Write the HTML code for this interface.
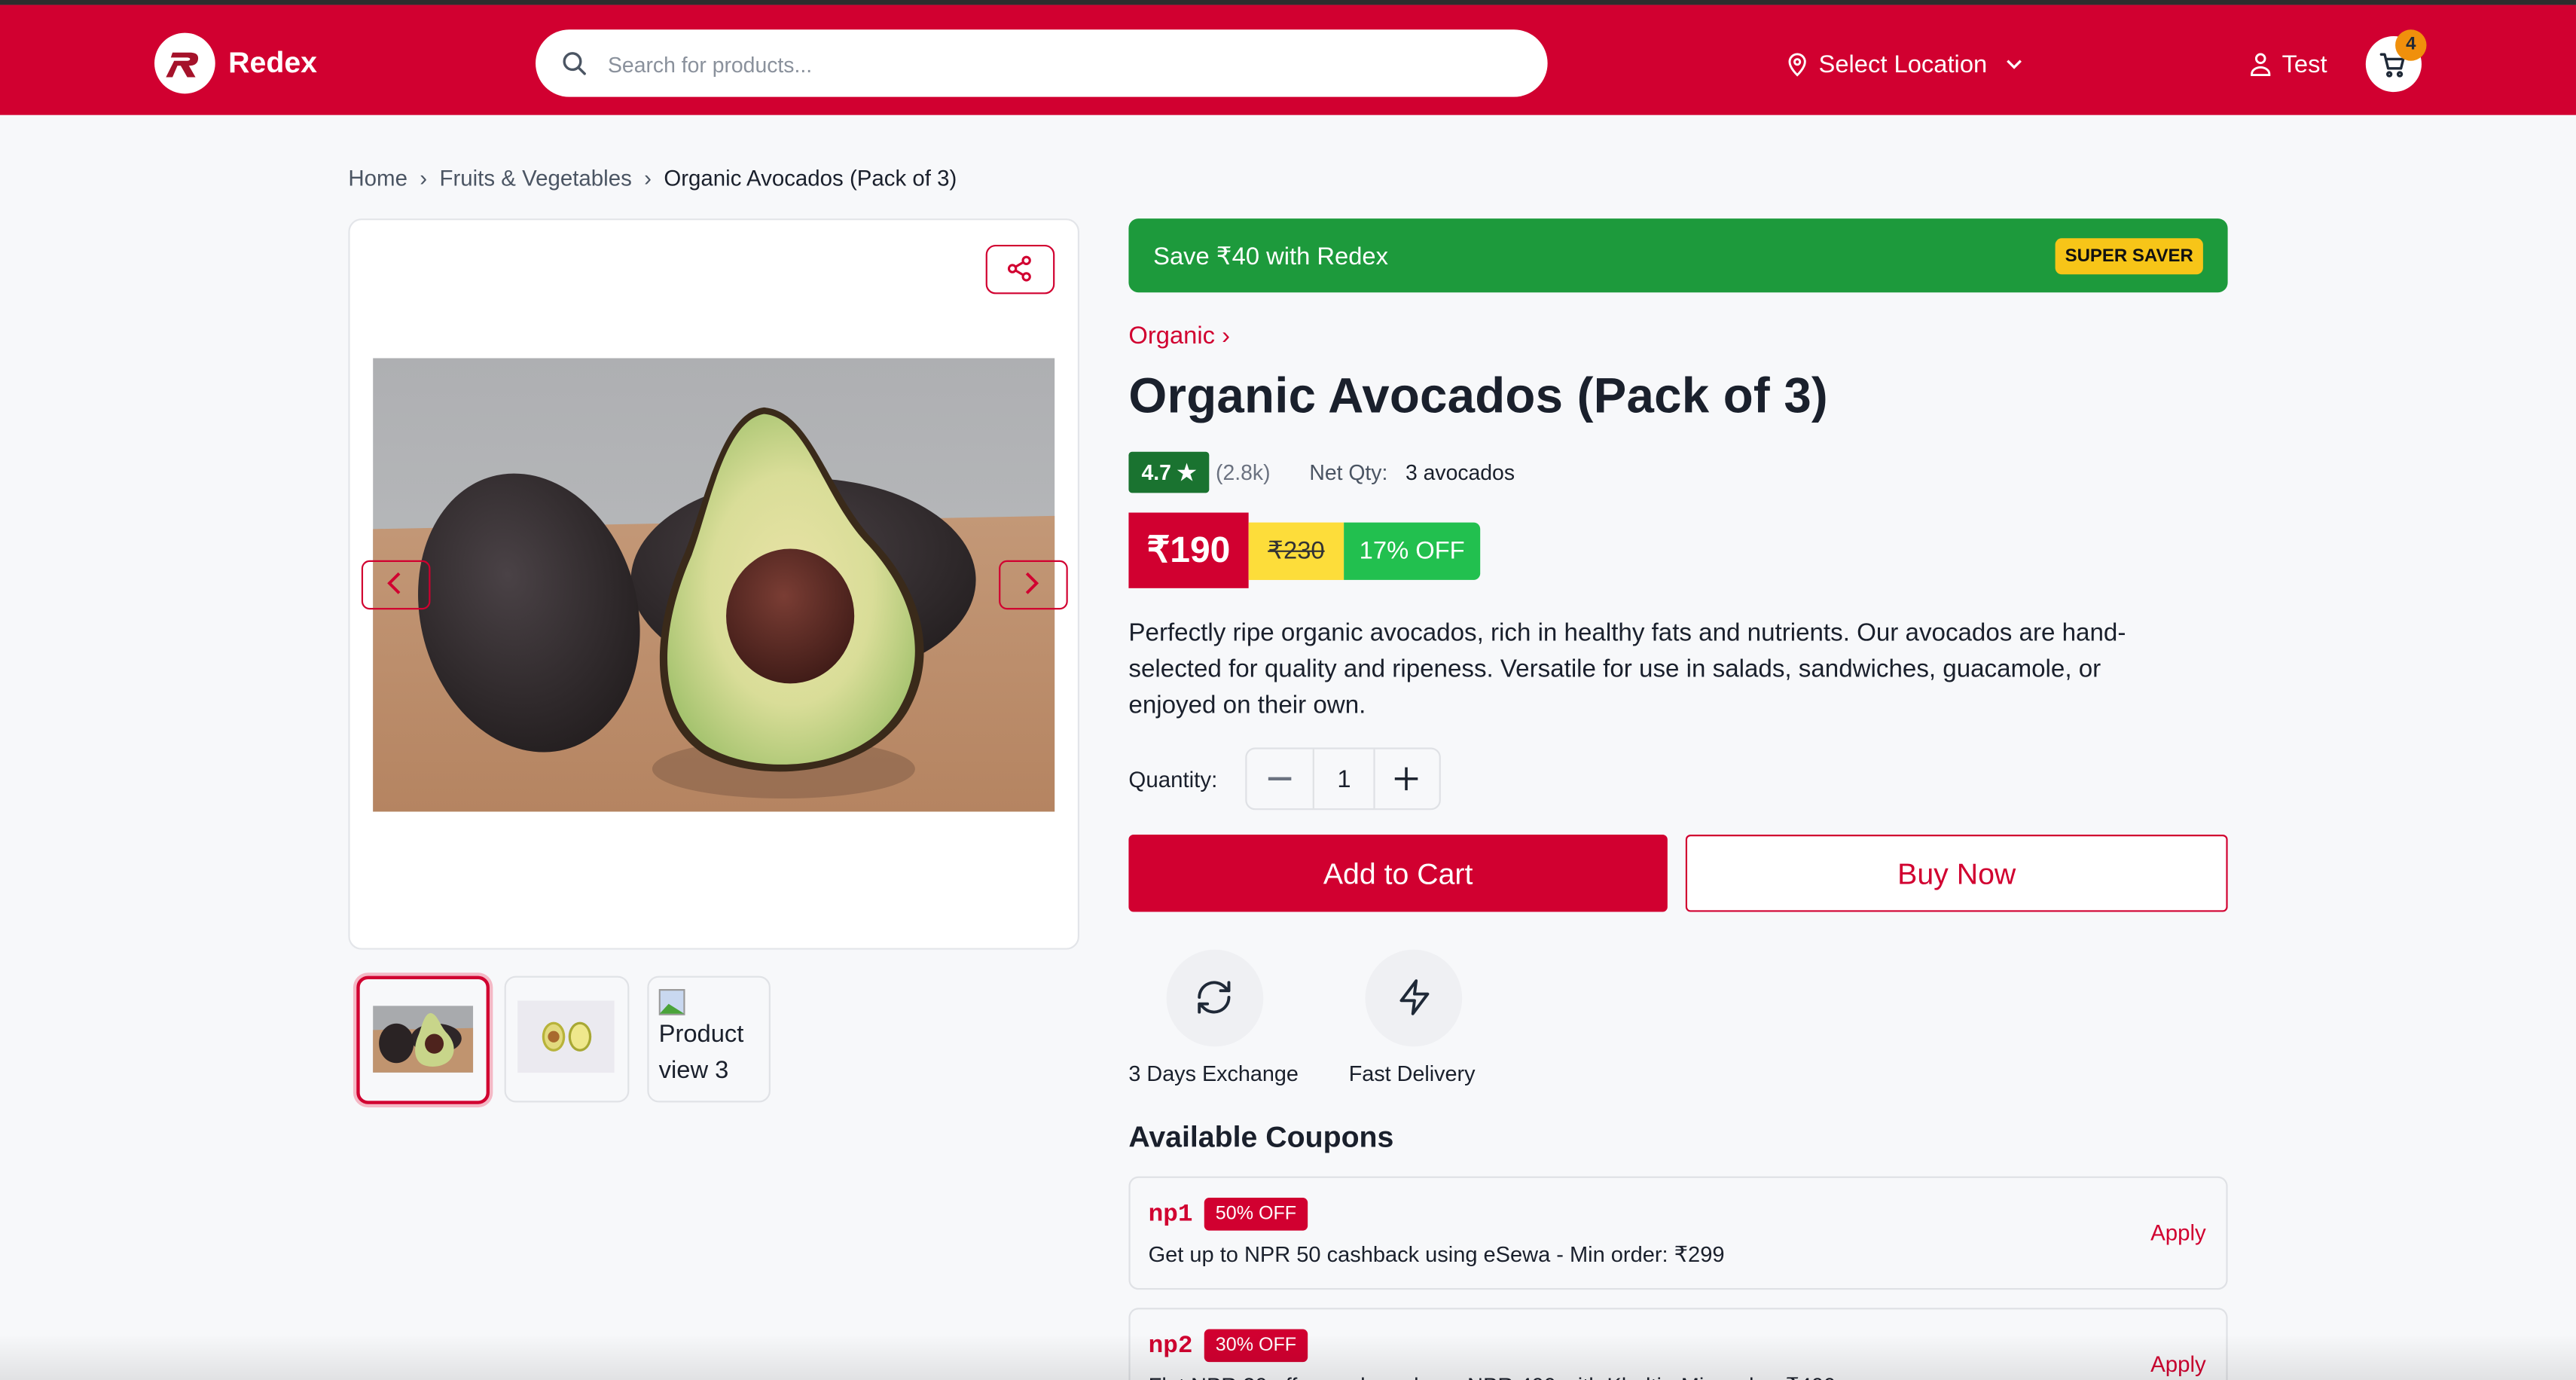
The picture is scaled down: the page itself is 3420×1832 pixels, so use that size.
<!DOCTYPE html>
<html><head><meta charset="utf-8">
<style>
html,body{margin:0;padding:0;width:3420px;height:1832px;overflow:hidden;background:#f7f8fa}
#w{position:absolute;left:0;top:0;width:1568px;height:840px;transform:scale(2.18112);transform-origin:0 0;font-family:"Liberation Sans",sans-serif;color:#1a202c;background:#f7f8fa;overflow:hidden}
.a{position:absolute;white-space:nowrap}
.red{color:#d10030}
</style></head><body><div id="w">
<!-- header -->
<div class="a" style="left:0;top:0;width:1568px;height:3px;background:#2d2d2d"></div>
<div class="a" style="left:0;top:3px;width:1568px;height:67px;background:#d10030"></div>
<div class="a" style="left:94px;top:20px;width:37px;height:37px;border-radius:50%;background:#fff"></div>
<svg class="a" style="left:101px;top:29px" width="24" height="20" viewBox="0 0 24 20"><path d="M4 3h11c4 0 5 2 4.5 4.5S17 11 14 11l4 7h-5l-4-7H7l-3 7H0l5-10h8c1.5 0 2-1 1.5-1.5S13 6 12 6H3z" fill="#a5122a"/></svg>
<div class="a" style="left:139px;top:28px;font-size:18px;font-weight:bold;color:#fff">Redex</div>
<div class="a" style="left:326px;top:18px;width:616px;height:41px;border-radius:21px;background:#fff"></div>
<svg class="a" style="left:341px;top:30px" width="17" height="17" viewBox="0 0 24 24" fill="none" stroke="#4b5563" stroke-width="2.2" stroke-linecap="round"><circle cx="10.5" cy="10.5" r="7"/><path d="M16 16l5 5"/></svg>
<div class="a" style="left:370px;top:32px;font-size:13px;color:#8a919c">Search for products...</div>
<svg class="a" style="left:1086px;top:30px" width="16" height="18" viewBox="0 0 24 24" fill="none" stroke="#fff" stroke-width="2"><path d="M12 22s-7-6.5-7-12a7 7 0 0 1 14 0c0 5.5-7 12-7 12z"/><circle cx="12" cy="10" r="2.5"/></svg>
<div class="a" style="left:1107px;top:31px;font-size:15px;color:#fff">Select Location</div>
<svg class="a" style="left:1220px;top:34px" width="12" height="10" viewBox="0 0 12 10" fill="none" stroke="#fff" stroke-width="1.5"><path d="M2 3l4 4 4-4"/></svg>
<svg class="a" style="left:1368px;top:30px" width="16" height="18" viewBox="0 0 24 24" fill="none" stroke="#fff" stroke-width="2"><circle cx="12" cy="7" r="4"/><path d="M4 22v-1a8 6 0 0 1 16 0v1z"/></svg>
<div class="a" style="left:1389px;top:31px;font-size:15px;color:#fff">Test</div>
<div class="a" style="left:1440px;top:22px;width:34px;height:34px;border-radius:50%;background:#fff"></div>
<svg class="a" style="left:1448px;top:31px" width="17" height="17" viewBox="0 0 24 24" fill="none" stroke="#1f2937" stroke-width="2.2" stroke-linecap="round" stroke-linejoin="round"><path d="M2 3h3l3 12h11l2-8H6"/><circle cx="9" cy="20" r="1.6"/><circle cx="18" cy="20" r="1.6"/></svg>
<div class="a" style="left:1458px;top:18px;width:19px;height:19px;border-radius:50%;background:#f0900c;color:#1f2937;font-size:11px;font-weight:bold;text-align:center;line-height:19px">4</div>
<!-- breadcrumb -->
<div class="a" style="left:212px;top:101px;font-size:13.5px;color:#4b5563">Home &nbsp;›&nbsp; Fruits &amp; Vegetables &nbsp;›&nbsp; <span style="color:#1a202c">Organic Avocados (Pack of 3)</span></div>
<!-- image card -->
<div class="a" style="left:212px;top:133px;width:443px;height:443px;background:#fff;border:1px solid #e3e5e9;border-radius:8px"></div>
<div class="a" style="left:600px;top:149px;width:40px;height:28px;border:1.3px solid #d10030;border-radius:6px"></div>
<svg class="a" style="left:612px;top:155px" width="17" height="17" viewBox="0 0 24 24" fill="none" stroke="#d10030" stroke-width="2"><circle cx="18" cy="5" r="3"/><circle cx="6" cy="12" r="3"/><circle cx="18" cy="19" r="3"/><path d="M8.6 13.5l6.8 4M15.4 6.5l-6.8 4"/></svg>
<svg class="a" style="left:227px;top:218px" width="415" height="276" viewBox="0 0 415 276">
<defs>
<linearGradient id="wall" x1="0" y1="0" x2="0" y2="1"><stop offset="0" stop-color="#aeafb2"/><stop offset="1" stop-color="#bfc2c3"/></linearGradient>
<linearGradient id="tab" x1="0" y1="0" x2="0" y2="1"><stop offset="0" stop-color="#c39877"/><stop offset="1" stop-color="#b58461"/></linearGradient>
<radialGradient id="fl" cx="0.5" cy="0.5" r="0.6"><stop offset="0" stop-color="#e9e3a6"/><stop offset="0.55" stop-color="#d9dd98"/><stop offset="1" stop-color="#9fc06a"/></radialGradient>
<radialGradient id="pit" cx="0.45" cy="0.35" r="0.7"><stop offset="0" stop-color="#7a3d34"/><stop offset="1" stop-color="#3d1a16"/></radialGradient>
<radialGradient id="sk" cx="0.45" cy="0.35" r="0.7"><stop offset="0" stop-color="#4a4246"/><stop offset="1" stop-color="#221d1e"/></radialGradient>
</defs>
<rect width="415" height="276" fill="url(#wall)"/>
<path d="M0 104 L415 96 L415 276 L0 276Z" fill="url(#tab)"/>
<ellipse cx="262" cy="135" rx="105" ry="62" fill="url(#sk)"/>
<ellipse cx="95" cy="155" rx="66" ry="86" transform="rotate(-15 95 155)" fill="url(#sk)"/>
<ellipse cx="250" cy="250" rx="80" ry="18" fill="#7e5a44" opacity="0.5"/>
<path d="M238 30 C212 33 202 88 190 118 C168 168 168 218 200 240 C232 260 302 256 326 214 C346 178 332 138 302 108 C276 78 266 32 238 30Z" fill="#3a2a1a"/>
<path d="M238 34 C214 38 205 90 194 120 C173 168 173 215 203 236 C233 255 299 252 321 212 C340 178 327 140 299 111 C273 82 264 36 238 34Z" fill="url(#fl)"/>
<ellipse cx="254" cy="157" rx="39" ry="41" fill="url(#pit)"/>
</svg>
<div class="a" style="left:220px;top:341px;width:40px;height:28px;border:1.3px solid #d10030;border-radius:5px"></div>
<svg class="a" style="left:234px;top:347px" width="12" height="16" viewBox="0 0 12 16" fill="none" stroke="#d10030" stroke-width="1.8"><path d="M9 2L3 8l6 6"/></svg>
<div class="a" style="left:608px;top:341px;width:40px;height:28px;border:1.3px solid #d10030;border-radius:5px"></div>
<svg class="a" style="left:622px;top:347px" width="12" height="16" viewBox="0 0 12 16" fill="none" stroke="#d10030" stroke-width="1.8"><path d="M3 2l6 6-6 6"/></svg>
<!-- thumbs -->
<div class="a" style="left:217px;top:594px;width:77px;height:74px;border:2.5px solid #d10030;border-radius:7px;box-shadow:0 0 0 2px #f4b8c5;background:#f7f8fa"></div>
<svg class="a" style="left:227px;top:612px" width="61" height="41" viewBox="0 0 415 276"><rect width="415" height="276" fill="#a8aaad"/><path d="M0 100 L415 92 L415 276 L0 276Z" fill="#c0946f"/><ellipse cx="262" cy="135" rx="105" ry="62" fill="#2e2628"/><ellipse cx="97" cy="155" rx="72" ry="82" fill="#2a2324"/><path d="M238 30 C212 33 202 88 190 118 C168 168 168 218 200 240 C232 260 302 256 326 214 C346 178 332 138 302 108 C276 78 266 32 238 30Z" fill="#c8d58a"/><ellipse cx="254" cy="157" rx="39" ry="41" fill="#4e231d"/></svg>
<div class="a" style="left:307px;top:594px;width:74px;height:75px;border:1px solid #e0e2e6;border-radius:7px;background:#f7f8fa"></div>
<svg class="a" style="left:315px;top:609px" width="59" height="44" viewBox="0 0 59 44"><rect width="59" height="44" fill="#ebeaf0"/><ellipse cx="22" cy="22" rx="7" ry="9" fill="#b8b33a"/><ellipse cx="22" cy="22" rx="5.5" ry="7.5" fill="#e2da7e"/><circle cx="22" cy="22" r="3.5" fill="#a86a2e"/><ellipse cx="38" cy="22" rx="7" ry="9" fill="#a8a834"/><ellipse cx="38" cy="22" rx="5.5" ry="7.5" fill="#efe88c"/></svg>
<div class="a" style="left:394px;top:594px;width:73px;height:75px;border:1px solid #e0e2e6;border-radius:7px;background:#f7f8fa"></div>
<svg class="a" style="left:401px;top:602px" width="16" height="16" viewBox="0 0 16 16"><rect x="0.5" y="0.5" width="15" height="15" fill="#c9d8f0" stroke="#999"/><path d="M0.5 15 L6 9 L15.5 15Z" fill="#4aa33a"/></svg>
<div class="a" style="left:401px;top:619px;font-size:15px;line-height:22px;white-space:normal;width:66px">Product view 3</div>
<!-- right column -->
<div class="a" style="left:687px;top:133px;width:669px;height:45px;background:#1d9a3c;border-radius:6px"></div>
<div class="a" style="left:702px;top:147px;font-size:15px;color:#fff">Save ₹40 with Redex</div>
<div class="a" style="left:1251px;top:145px;width:90px;height:22px;background:#f7c518;border-radius:4px;font-size:11px;font-weight:bold;text-align:center;line-height:22px;color:#111">SUPER SAVER</div>
<div class="a red" style="left:687px;top:196px;font-size:15px">Organic ›</div>
<div class="a" style="left:687px;top:225px;font-size:30px;font-weight:bold;letter-spacing:0.1px">Organic Avocados (Pack of 3)</div>
<div class="a" style="left:687px;top:275px;width:49px;height:25px;background:#1a7330;border-radius:2px;color:#fff;font-size:13px;font-weight:bold;line-height:25px;text-align:center">4.7 ★</div>
<div class="a" style="left:740px;top:280px;font-size:13px;color:#6b7280">(2.8k)</div>
<div class="a" style="left:797px;top:280px;font-size:13px;color:#4b5563">Net Qty: &nbsp;&nbsp;<span style="color:#1a202c">3 avocados</span></div>
<div class="a" style="left:687px;top:312px;width:73px;height:46px;background:#d10030;color:#fff;font-size:22px;font-weight:bold;line-height:46px;text-align:center">₹190</div>
<div class="a" style="left:760px;top:318px;width:58px;height:35px;background:#fddd3a;color:#333;font-size:15px;line-height:35px;text-align:center;text-decoration:line-through">₹230</div>
<div class="a" style="left:818px;top:318px;width:83px;height:35px;background:#22c04f;color:#fff;font-size:15px;line-height:35px;text-align:center;border-radius:0 4px 4px 0">17% OFF</div>
<div class="a" style="left:687px;top:375px;font-size:15.2px;line-height:22px">Perfectly ripe organic avocados, rich in healthy fats and nutrients. Our avocados are hand-<br>selected for quality and ripeness. Versatile for use in salads, sandwiches, guacamole, or<br>enjoyed on their own.</div>
<div class="a" style="left:687px;top:467px;font-size:13.5px">Quantity:</div>
<div class="a" style="left:758px;top:455px;width:117px;height:36px;border:1px solid #dfe1e5;border-radius:6px;background:#f7f8fa"></div>
<div class="a" style="left:799px;top:456px;width:1px;height:36px;background:#dfe1e5"></div>
<div class="a" style="left:836px;top:456px;width:1px;height:36px;background:#dfe1e5"></div>
<div class="a" style="left:772px;top:473px;width:14px;height:1.5px;background:#6b7280"></div>
<div class="a" style="left:814px;top:466px;font-size:15px">1</div>
<svg class="a" style="left:848px;top:466px" width="16" height="16" viewBox="0 0 16 16" stroke="#1a202c" stroke-width="1.6"><path d="M8 1v14M1 8h14"/></svg>
<div class="a" style="left:687px;top:508px;width:328px;height:47px;background:#d10030;border-radius:3px;color:#fff;font-size:18px;line-height:48px;text-align:center">Add to Cart</div>
<div class="a" style="left:1026px;top:508px;width:328px;height:45px;border:1.3px solid #d10030;border-radius:3px;color:#d10030;font-size:18px;line-height:46px;text-align:center;background:#fff">Buy Now</div>
<div class="a" style="left:710px;top:578px;width:59px;height:59px;border-radius:50%;background:#eff0f3"></div>
<svg class="a" style="left:727px;top:595px" width="24" height="24" viewBox="0 0 24 24" fill="none" stroke="#1f2937" stroke-width="1.8" stroke-linecap="round" stroke-linejoin="round"><path d="M3 12a9 9 0 0 1 15.5-6.2L21 8M21 3v5h-5M21 12a9 9 0 0 1-15.5 6.2L3 16M3 21v-5h5"/></svg>
<div class="a" style="left:831px;top:578px;width:59px;height:59px;border-radius:50%;background:#eff0f3"></div>
<svg class="a" style="left:849px;top:595px" width="24" height="24" viewBox="0 0 24 24" fill="none" stroke="#1f2937" stroke-width="1.8" stroke-linejoin="round"><path d="M13 2L4 14h8l-1 8 9-12h-8z"/></svg>
<div class="a" style="left:687px;top:646px;font-size:13.2px">3 Days Exchange</div>
<div class="a" style="left:821px;top:646px;font-size:13.2px">Fast Delivery</div>
<div class="a" style="left:687px;top:682px;font-size:18px;font-weight:bold">Available Coupons</div>
<div class="a" style="left:687px;top:716px;width:667px;height:67px;border:1px solid #dfe1e5;border-radius:6px;background:#f7f8fa"></div>
<div class="a red" style="left:699px;top:731px;font-family:'Liberation Mono',monospace;font-weight:bold;font-size:15px">np1</div>
<div class="a" style="left:733px;top:729px;width:63px;height:20px;background:#d10030;border-radius:3px;color:#fff;font-size:11.5px;line-height:20px;text-align:center">50% OFF</div>
<div class="a" style="left:699px;top:756px;font-size:13.3px">Get up to NPR 50 cashback using eSewa - Min order: ₹299</div>
<div class="a red" style="left:1309px;top:743px;font-size:13.5px">Apply</div>
<div class="a" style="left:687px;top:796px;width:667px;height:67px;border:1px solid #dfe1e5;border-radius:6px;background:#f7f8fa"></div>
<div class="a red" style="left:699px;top:811px;font-family:'Liberation Mono',monospace;font-weight:bold;font-size:15px">np2</div>
<div class="a" style="left:733px;top:809px;width:63px;height:20px;background:#d10030;border-radius:3px;color:#fff;font-size:11.5px;line-height:20px;text-align:center">30% OFF</div>
<div class="a" style="left:699px;top:836px;font-size:13.3px">Flat NPR 30 off on orders above NPR 400 with Khalti - Min order: ₹400</div>
<div class="a red" style="left:1309px;top:823px;font-size:13.5px">Apply</div>
<div class="a" style="left:0;top:812px;width:1568px;height:28px;background:linear-gradient(to bottom,rgba(0,0,0,0),rgba(0,0,0,0.09))"></div>
</div></body></html>
